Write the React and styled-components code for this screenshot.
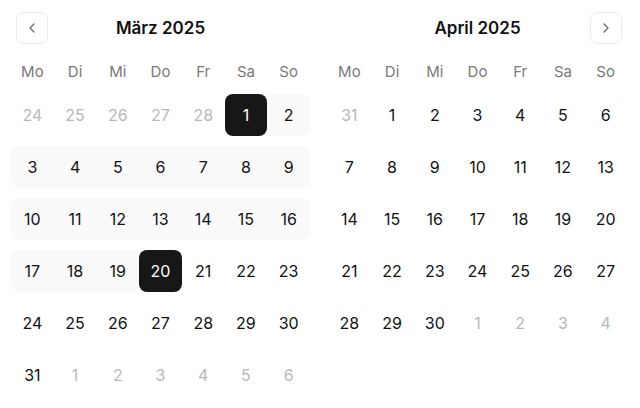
import React from "react";
import styled, { createGlobalStyle } from "styled-components";

const GlobalStyle = createGlobalStyle`
  html, body {
    margin: 0;
    padding: 0;
    background: #ffffff;
    font-family: Inter, "Liberation Sans", sans-serif;
  }
`;

const Page = styled.div`
  width: 640px;
  height: 408px;
  box-sizing: border-box;
  padding: 12px 12px 0 11px;
  display: flex;
  gap: 18px;
  overflow: hidden;
`;

const Month = styled.div`
  width: 299px;
  display: flex;
  flex-direction: column;
`;

const Header = styled.div`
  position: relative;
  height: 32px;
  display: flex;
  align-items: center;
  justify-content: center;
`;

const Title = styled.div`
  font-size: 17px;
  font-weight: 600;
  color: #111111;
`;

const NavButton = styled.button`
  position: absolute;
  top: 0;
  ${(p) => (p.$side === "left" ? "left: 5px;" : "right: 5px;")}
  width: 32px;
  height: 32px;
  box-sizing: border-box;
  border: 1px solid #ececec;
  border-radius: 7px;
  background: #ffffff;
  display: flex;
  align-items: center;
  justify-content: center;
  padding: 0;
  color: #6b6b6b;
`;

const WeekRow = styled.div`
  display: grid;
  grid-template-columns: repeat(7, 1fr);
  height: 34px;
  margin-top: 10px;
  margin-bottom: 6px;
  align-items: center;
`;

const WeekDay = styled.div`
  text-align: center;
  font-size: 15px;
  color: #7a7a7a;
`;

const Weeks = styled.div`
  display: flex;
  flex-direction: column;
  gap: 10px;
`;

const Row = styled.div`
  display: grid;
  grid-template-columns: repeat(7, 1fr);
  height: 42px;
`;

const Cell = styled.div`
  display: flex;
  align-items: center;
  justify-content: center;
  font-size: 16px;
  color: ${(p) => (p.$selected ? "#ffffff" : p.$outside ? "#b8b8b8" : "#111111")};
  background: ${(p) => (p.$selected ? "#171717" : p.$range ? "#fafafa" : "transparent")};
  border-radius: ${(p) =>
    p.$selected ? "8px" : `${p.$first ? "8px" : "0"} ${p.$last ? "8px" : "0"} ${p.$last ? "8px" : "0"} ${p.$first ? "8px" : "0"}`};
`;

const Chevron = ({ dir }) => (
  <svg width="16" height="16" viewBox="0 0 24 24" fill="none" stroke="currentColor" strokeWidth="2" strokeLinecap="round" strokeLinejoin="round">
    <path d={dir === "left" ? "M15 18l-6-6 6-6" : "M9 18l6-6-6-6"} />
  </svg>
);

const weekdays = ["Mo", "Di", "Mi", "Do", "Fr", "Sa", "So"];

// build the weeks of a month, padded with days of the months around it
function buildMonth(startOffset, daysInMonth, prevDays, rows) {
  const cells = [];
  for (let i = 0; i < startOffset; i++) {
    cells.push({ day: prevDays - startOffset + 1 + i, outside: true });
  }
  for (let d = 1; d <= daysInMonth; d++) cells.push({ day: d, outside: false });
  let n = 1;
  while (cells.length < rows * 7) cells.push({ day: n++, outside: true });
  const weeks = [];
  for (let r = 0; r < rows; r++) weeks.push(cells.slice(r * 7, r * 7 + 7));
  return weeks;
}

const MonthView = ({ title, weeks, nav, rangeFrom, rangeTo }) => {
  const inRange = (c) => !c.outside && rangeFrom && c.day >= rangeFrom && c.day <= rangeTo;
  return (
    <Month>
      <Header>
        {nav === "left" && (
          <NavButton $side="left">
            <Chevron dir="left" />
          </NavButton>
        )}
        <Title>{title}</Title>
        {nav === "right" && (
          <NavButton $side="right">
            <Chevron dir="right" />
          </NavButton>
        )}
      </Header>
      <WeekRow>
        {weekdays.map((w) => (
          <WeekDay key={w}>{w}</WeekDay>
        ))}
      </WeekRow>
      <Weeks>
        {weeks.map((week, r) => (
          <Row key={r}>
            {week.map((c, i) => {
              const range = inRange(c);
              const selected = range && (c.day === rangeFrom || c.day === rangeTo);
              const first = range && (i === 0 || !inRange(week[i - 1]));
              const last = range && (i === 6 || !inRange(week[i + 1]));
              return (
                <Cell key={i} $outside={c.outside} $range={range} $selected={selected} $first={first} $last={last}>
                  {c.day}
                </Cell>
              );
            })}
          </Row>
        ))}
      </Weeks>
    </Month>
  );
};

export default function App() {
  const march = buildMonth(5, 31, 28, 6);
  const april = buildMonth(1, 30, 31, 5);
  return (
    <>
      <GlobalStyle />
      <Page>
        <MonthView title="März 2025" weeks={march} nav="left" rangeFrom={1} rangeTo={20} />
        <MonthView title="April 2025" weeks={april} nav="right" />
      </Page>
    </>
  );
}
